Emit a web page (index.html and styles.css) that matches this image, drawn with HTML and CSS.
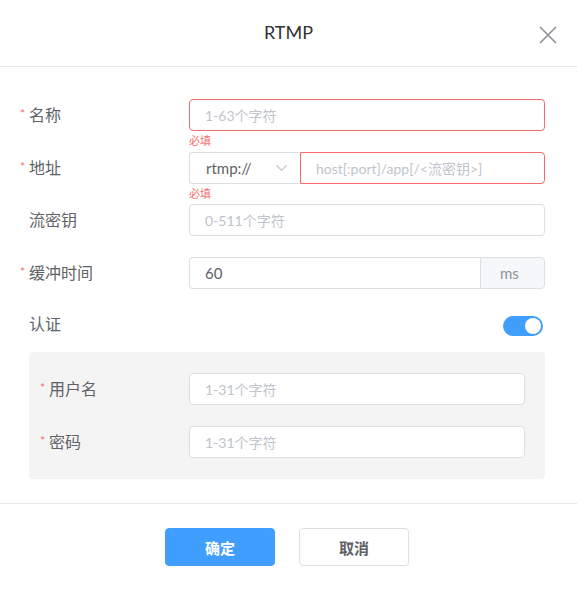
FILE: index.html
```html
<!DOCTYPE html>
<html lang="zh-CN">
<head>
<meta charset="utf-8">
<title>RTMP</title>
<link rel="stylesheet" href="styles.css">
</head>
<body>
<div class="dialog">
  <header class="header">
    <span class="spacer"></span>
    <h1 class="title">RTMP</h1>
    <button class="close" type="button" aria-label="关闭">
      <svg width="18" height="18" viewBox="0 0 18 18"><path d="M1.5 1.5 L16.5 16.5 M16.5 1.5 L1.5 16.5" stroke="#909399" stroke-width="1.7" fill="none" stroke-linecap="round"/></svg>
    </button>
  </header>

  <form class="body">
    <div class="row">
      <label class="label"><span class="req">*</span>名称</label>
      <div class="control">
        <input class="input is-error" placeholder="1-63个字符">
        <div class="error">必填</div>
      </div>
    </div>

    <div class="row row-tight">
      <label class="label"><span class="req">*</span>地址</label>
      <div class="control group">
        <div class="select">
          <span class="select-text">rtmp://</span>
          <svg width="11" height="6" viewBox="0 0 11 6"><path d="M0.5 0.5 L5.5 5.2 L10.5 0.5" stroke="#c0c4cc" stroke-width="1.1" fill="none"/></svg>
        </div>
        <input class="input is-error group-input" placeholder="host[:port]/app[/<流密钥>]">
        <div class="error">必填</div>
      </div>
    </div>

    <div class="row">
      <label class="label"><span class="req"></span>流密钥</label>
      <div class="control">
        <input class="input" placeholder="0-511个字符">
      </div>
    </div>

    <div class="row">
      <label class="label"><span class="req">*</span>缓冲时间</label>
      <div class="control group">
        <input class="input addon-input" value="60">
        <span class="addon">ms</span>
      </div>
    </div>

    <div class="row row-switch">
      <label class="label label-switch"><span class="req"></span>认证</label>
      <div class="control switch-wrap">
        <span class="switch"><span class="knob"></span></span>
      </div>
    </div>

    <div class="panel">
      <div class="row">
        <label class="label label-inner"><span class="req">*</span>用户名</label>
        <div class="control">
          <input class="input" placeholder="1-31个字符">
        </div>
      </div>
      <div class="row">
        <label class="label label-inner"><span class="req">*</span>密码</label>
        <div class="control">
          <input class="input" placeholder="1-31个字符">
        </div>
      </div>
    </div>
  </form>

  <footer class="footer">
    <button class="btn btn-primary" type="button">确定</button>
    <button class="btn btn-default" type="button">取消</button>
  </footer>
</div>
</body>
</html>
```

FILE: styles.css
```css
* { box-sizing: border-box; }

html, body {
  margin: 0;
  padding: 0;
  background: #ffffff;
}

body {
  font-family: Lato, "Noto Sans CJK SC", sans-serif;
  color: #606266;
}

.dialog {
  width: 577px;
  height: 589px;
  background: #ffffff;
}

/* header */
.header {
  height: 67px;
  border-bottom: 1px solid #e8eaee;
  display: grid;
  grid-template-columns: 1fr auto 1fr;
  align-items: center;
  padding-bottom: 2px;
}

.title {
  margin: 0;
  font-size: 18px;
  font-weight: 400;
  color: #303133;
  line-height: 22px;
}

.close {
  justify-self: end;
  margin-right: 20px;
  margin-top: 5px;
  padding: 0;
  border: 0;
  background: none;
  width: 18px;
  height: 18px;
  display: flex;
}

/* form */
.body {
  margin: 0;
  padding: 32px 32px 0 20px;
}

.row {
  display: flex;
  align-items: center;
  margin-bottom: 21px;
}

.row-tight {
  margin-bottom: 20px;
}

.label {
  flex: none;
  width: 169px;
  display: flex;
  align-items: center;
  font-size: 16px;
  line-height: 20px;
  color: #606266;
}

.label-inner {
  width: 149px;
}

.label-switch {
  margin-top: -4px;
}

.req {
  width: 9px;
  flex: none;
  color: #f56c6c;
  font-size: 12px;
  line-height: 12px;
  margin-top: -3px;
}

.control {
  flex: 1;
  position: relative;
  min-width: 0;
}

.input {
  display: block;
  width: 100%;
  height: 32px;
  border: 1px solid #dcdfe6;
  border-radius: 4px;
  padding: 0 15px;
  font-family: inherit;
  font-size: 15px;
  color: #606266;
  background: #ffffff;
  outline: none;
}

.input::placeholder {
  font-size: 14px;
  color: #c0c4cc;
}

.input.is-error {
  border-color: #f56c6c;
}

.error {
  position: absolute;
  top: 100%;
  left: 0;
  padding-top: 4px;
  font-size: 11px;
  line-height: 11px;
  color: #f56c6c;
}

.group {
  display: flex;
}

.select {
  flex: none;
  width: 111px;
  height: 32px;
  border: 1px solid #dcdfe6;
  border-right: 0;
  border-radius: 4px 0 0 4px;
  display: flex;
  align-items: center;
  justify-content: space-between;
  padding: 0 13px 0 16px;
}

.select-text {
  font-size: 15px;
  color: #606266;
}

.group-input {
  flex: 1;
  border-radius: 0 4px 4px 0;
}

.addon-input {
  flex: 1;
  border-right: 0;
  border-radius: 4px 0 0 4px;
}

.addon {
  flex: none;
  width: 65px;
  height: 32px;
  border: 1px solid #dcdfe6;
  border-radius: 0 4px 4px 0;
  background: #f5f7fa;
  color: #909399;
  font-size: 15px;
  line-height: 30px;
  padding-left: 19px;
}

.row-switch {
  height: 32px;
  margin-bottom: 10px;
}

.switch-wrap {
  display: flex;
  justify-content: flex-end;
  padding-right: 2px;
}

.switch {
  width: 40px;
  height: 20px;
  border-radius: 10px;
  background: #409eff;
  display: flex;
  align-items: center;
  justify-content: flex-end;
  padding-right: 2px;
}

.knob {
  width: 16px;
  height: 16px;
  border-radius: 50%;
  background: #ffffff;
}

.panel {
  margin-left: 9px;
  background: #f4f4f5;
  border-radius: 4px;
  padding: 21px 20px 21px 11px;
}

.panel .row:last-child {
  margin-bottom: 0;
}

/* footer */
.footer {
  margin-top: 24px;
  border-top: 1px solid #e8eaee;
  padding: 24px 3px 23px 0;
  display: flex;
  justify-content: center;
  gap: 24px;
}

.btn {
  width: 110px;
  height: 38px;
  border-radius: 4px;
  font-family: inherit;
  font-size: 15px;
  font-weight: 600;
  padding: 0;
}

.btn-primary {
  background: #409eff;
  border: 1px solid #409eff;
  color: #ffffff;
}

.btn-default {
  background: #ffffff;
  border: 1px solid #dcdfe6;
  color: #606266;
}
```
